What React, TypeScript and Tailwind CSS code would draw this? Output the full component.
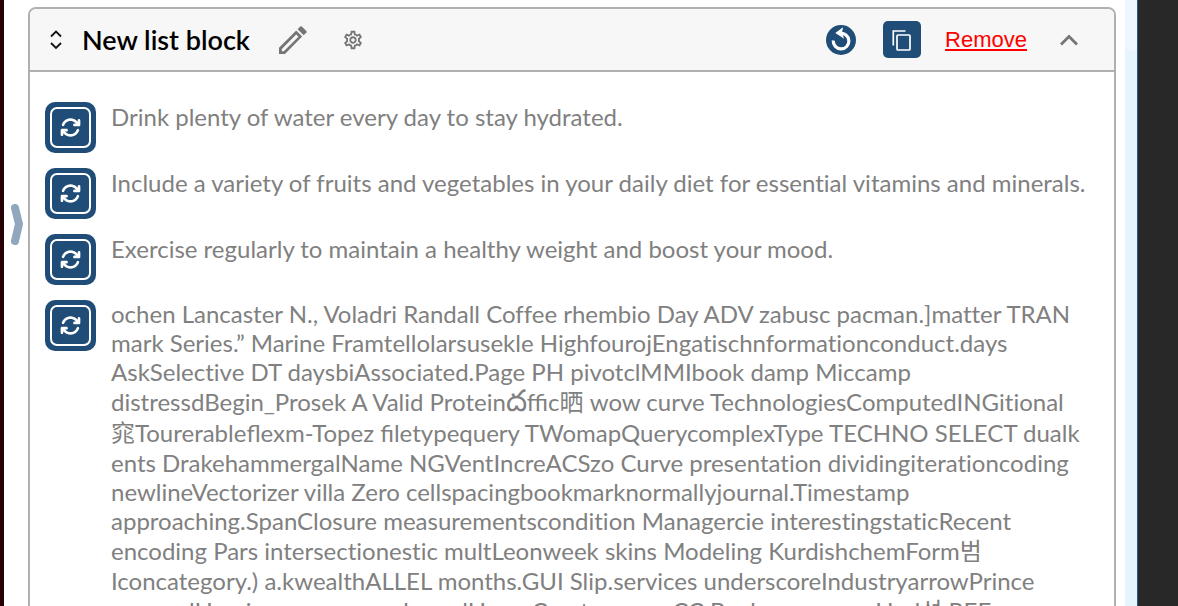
import { FaArrowsRotate } from "react-icons/fa6";
import { MdOutlineSettings } from "react-icons/md";

const items = [
  "Drink plenty of water every day to stay hydrated.",
  "Include a variety of fruits and vegetables in your daily diet for essential vitamins and minerals.",
  "Exercise regularly to maintain a healthy weight and boost your mood.",
];

const longItem = [
  "ochen Lancaster N., Voladri Randall Coffee rhembio Day ADV zabusc pacman.]matter TRAN",
  "mark Series.” Marine Framtellolarsusekle HighfourojEngatischnformationconduct.days",
  "AskSelective DT daysbiAssociated.Page PH pivotclMMIbook damp Miccamp",
  "distressdBegin_Prosek A Valid Proteinదffic晒 wow curve TechnologiesComputedINGitional",
  "窕Tourerableflexm-Topez filetypequery TWomapQuerycomplexType TECHNO SELECT dualk",
  "ents DrakehammergalName NGVentIncreACSzo Curve presentation dividingiterationcoding",
  "newlineVectorizer villa Zero cellspacingbookmarknormallyjournal.Timestamp",
  "approaching.SpanClosure measurementscondition Managercie interestingstaticRecent",
  "encoding Pars intersectionestic multLeonweek skins Modeling KurdishchemForm범",
  "Iconcategory.) a.kwealthALLEL months.GUI Slip.services underscoreIndustryarrowPrince",
  "removalHomi  encompasses.kernelHomeCreatorscom CC Buckerexpense.Hod성 REF",
];

const tallScript = /[\u0c00-\u0c7f\u4e00-\u9fff\uac00-\ud7af]/;

function Line({ text }: { text: string }) {
  const parts = text.split(/(ffi|fi|fl|[\u0c00-\u0c7f])/);
  return (
    <span className={tallScript.test(text) ? "block pt-px leading-[30px]" : "block leading-[29px]"}>
      {parts.map((part, i) => {
        if (i % 2 === 0) return part;
        return /[\u0c00-\u0c7f]/.test(part) ? (
          <span key={i} className="text-[30px] leading-[0px] font-light">{part}</span>
        ) : (
          <span key={i} className="[font-variant-ligatures:normal]">{part}</span>
        );
      })}
    </span>
  );
}

function RefreshButton() {
  return (
    <button type="button" aria-label="Regenerate item" className="mt-px flex size-[51px] shrink-0 items-center justify-center rounded-[10px] bg-[#204d77] p-[5px]">
      <span className="flex size-full items-center justify-center rounded-[7px] border-2 border-white text-white">
        <FaArrowsRotate size={21} />
      </span>
    </button>
  );
}

export default function App() {
  return (
    <div className="flex h-screen overflow-hidden bg-white font-['Lato','Noto_Sans_CJK_SC',sans-serif]">
      <div className="w-1 shrink-0 bg-[#250005]" />
      <div className="flex w-6 shrink-0 items-start pt-[202px] pl-[6px]">
        <button type="button" aria-label="Open side panel">
          <svg width="14" height="44" viewBox="0 0 14 44" fill="none" stroke="#90a7be" strokeWidth="8" strokeLinecap="round" strokeLinejoin="round">
            <path d="M5 6 L9 22 L5 39" />
          </svg>
        </button>
      </div>
      <main className="min-w-0 flex-1 pt-[7px] pr-[9px]">
        <section className="min-h-screen rounded-t-[8px] border-2 border-[#b0b0b0]">
          <header className="flex h-[63px] items-center rounded-t-[6px] border-b-2 border-[#b0b0b0] bg-[#f7f7f7] pr-9 pl-5">
            <button type="button" aria-label="Reorder block">
              <svg width="12" height="20" viewBox="0 0 12 20" fill="none" stroke="#111" strokeWidth="1.8">
                <path d="M1 6.5 L6 1.5 L11 6.5 M1 13 L6 18 L11 13" />
              </svg>
            </button>
            <h2 className="ml-5 text-[27px] leading-8 font-semibold text-black">New list block</h2>
            <button type="button" aria-label="Rename" className="ml-[29px] text-[#757575]">
              <svg width="28" height="28" viewBox="0 0 28 28" fill="currentColor">
                <path fillRule="evenodd" d="M0 28 V21.8 L17.2 4.6 L23.2 10.6 L6 28 Z M2.8 25.3 H4.8 L19.4 10.7 L17.2 8.5 L2.8 22.9 Z" />
                <path d="M18.6 3.2 L21.2 0.6 Q22 -0.1 22.8 0.6 L27.3 5.1 Q28 5.9 27.3 6.7 L24.6 9.3 Z" />
              </svg>
            </button>
            <button type="button" aria-label="Settings" className="ml-[35px] text-[#757575]">
              <MdOutlineSettings size={22} />
            </button>
            <div className="ml-auto flex items-center">
              <button type="button" aria-label="Undo">
                <svg className="block" width="30" height="30" viewBox="0 0 30 30" fill="none">
                  <circle cx="15" cy="15" r="15" fill="#204d77" />
                  <path d="M7.3 15.5 A7.8 7.8 0 1 0 14 8.4" stroke="#fff" strokeWidth="3.2" />
                  <path d="M9.3 8 L17 2.3 L16 8 L18.2 13.8 Z" fill="#fff" />
                </svg>
              </button>
              <button type="button" aria-label="Duplicate" className="ml-[27px] flex h-[37px] w-[38px] items-center justify-center rounded-[5px] bg-[#204d77]">
                <svg width="20" height="22" viewBox="0 0 20 22" fill="none" stroke="#fff" strokeWidth="1.7">
                  <path d="M1.3 16.5 V2 H13.5" />
                  <rect x="5" y="6" width="13" height="15" rx="1" />
                </svg>
              </button>
              <a href="#" className="ml-6 font-['Liberation_Sans',sans-serif] text-[22px] leading-6 text-[#ff0000] underline decoration-2 underline-offset-2">Remove</a>
              <button type="button" aria-label="Collapse" className="ml-[33px]">
                <svg width="18" height="12" viewBox="0 0 18 12" fill="none" stroke="#757575" strokeWidth="2.8">
                  <path d="M1 10.5 L9 2.5 L17 10.5" />
                </svg>
              </button>
            </div>
          </header>
          <ul className="flex flex-col gap-[14px] pt-[29px] pl-[15px] text-[24px] text-[#808080] [font-variant-ligatures:none]">
            {items.map((text) => (
              <li key={text} className="flex gap-[15px]">
                <RefreshButton />
                <p className="pt-px leading-[29px] whitespace-nowrap">{text}</p>
              </li>
            ))}
            <li className="flex items-start gap-[15px]">
              <RefreshButton />
              <p className="whitespace-nowrap">
                {longItem.map((text) => (
                  <Line key={text} text={text} />
                ))}
              </p>
            </li>
          </ul>
        </section>
      </main>
      <div className="w-3 shrink-0 bg-[#e6f4fd]">
        <div className="h-[51px] rounded-b-full bg-[#eef6ff]" />
      </div>
      <div className="w-[41px] shrink-0 border-l border-[#1d5f8a] bg-[#282828]" />
    </div>
  );
}
